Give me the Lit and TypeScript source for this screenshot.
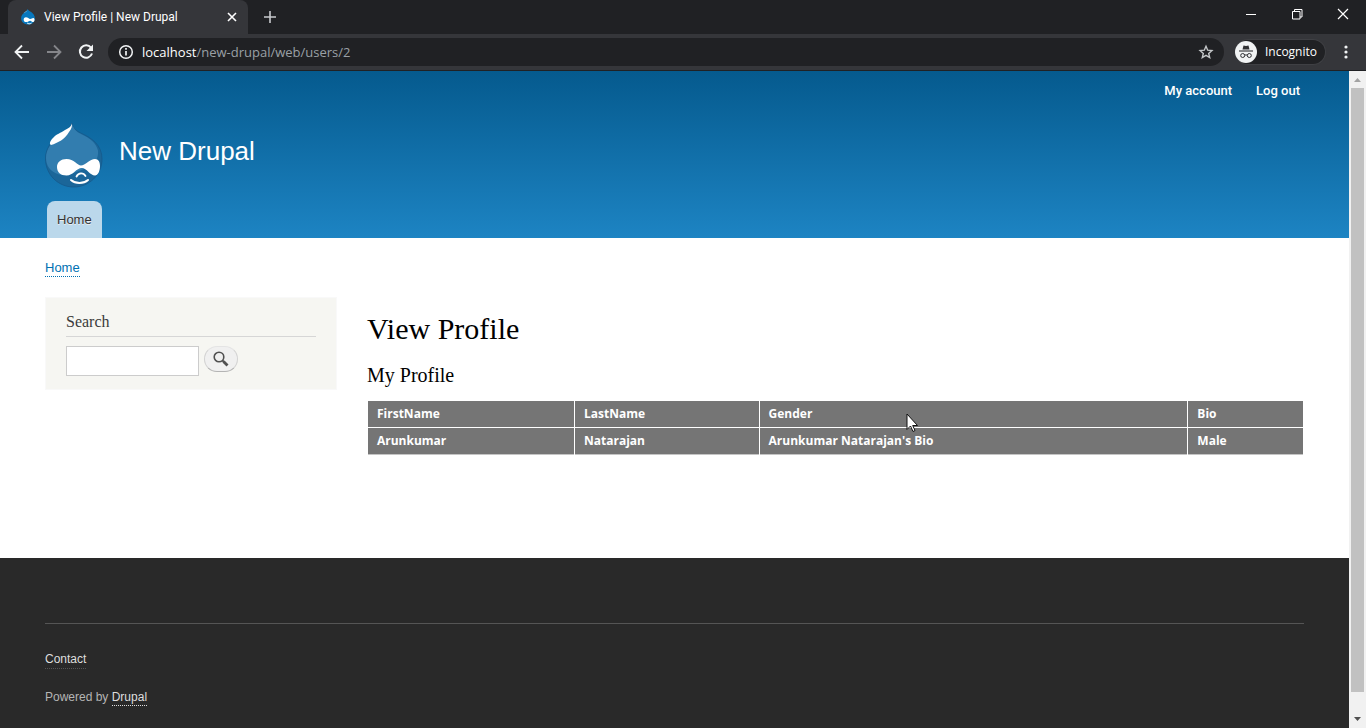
import { LitElement, html, css, svg } from "lit";
import { customElement } from "lit/decorators.js";

const druplicon = svg`
  <path d="M26.700 0c1.500 5 4 7.500 9 10C47 15 57 22 57 36 57 52 44 64 28.700 64S.5 52 .5 35.500C.5 26 6 18 14.500 12.500 20 9 27 7 26.700 0Z" fill="#1b6699" stroke="#15598b" stroke-width=".8"/>
  <path d="M27 1c2 6 5 8 10 10.500 8 4 14 8 16 16 1 9-5 16-12 18-8 2-16 8-27 6C5 49 1 42 1 35 1 26 7 18 15 13 21 9 26 7 27 1Z" fill="#327daf"/>
  <path d="M26.700 0c.8 3-.2 6-2.700 9-4 7-11 11-18 13-2-1-1-4 2-7 3-4 8-5 12-8 4-2 7-4 6.700-7Z" fill="#fff"/>
  <path d="M21.500 36c7.500 0 11 6.500 14.500 6.500 4 0 9-6.500 14-6.500 3.500 0 5 3 5 7 0 5-2 9.500-5 9.500-5 0-8.500-7.500-13-7.500-6 0-8.500 7.500-15.500 7.500-6 0-9.500-3.500-9.500-8.500s4-8 9.500-8Z" fill="#fff"/>
  <path d="M31.500 53.500c2-4 7-4 9-.5" fill="none" stroke="#fff" stroke-width="1.800" stroke-linecap="round"/>
  <path d="M26 57c4.500 4 12.500 4 17 0" fill="none" stroke="#fff" stroke-width="2" stroke-linecap="round"/>`;

@customElement("browser-bar")
class BrowserBar extends LitElement {
  static styles = css`
    :host { display: block; font: 12px/18px "Open Sans", "Noto Sans", sans-serif; color: #fff; background: #202124; }
    button { border: 0; padding: 0; background: none; color: inherit; font: inherit; display: grid; place-items: center; }
    svg { display: block; }
    .strip { display: flex; height: 34px; padding-left: 8px; }
    .tab { display: flex; align-items: center; width: 240px; box-sizing: border-box; padding: 0 9px 0 13px; gap: 9px; background: #35363a; border-radius: 8px 8px 0 0; }
    .title { flex: 1; white-space: nowrap; font-size: 12px; font-family: Roboto, sans-serif; }
    .add { width: 44px; }
    .windows { margin-left: auto; display: flex; height: 28px; }
    .windows button { width: 46px; }
    .toolbar { display: flex; align-items: center; height: 36px; background: #35363a; border-bottom: 1px solid #202124; padding: 0 12px 0 6px; }
    .nav { width: 32px; height: 32px; }
    .address { flex: 1; display: flex; align-items: center; height: 28px; margin: 0 11px 0 6px; padding: 0 10px; border-radius: 14px; background: #202124; gap: 8px; }
    .url { flex: 1; color: #9aa0a6; font: 13px/20px "Open Sans", sans-serif; }
    .host { color: #fff; }
    .mode { display: flex; align-items: center; gap: 8px; height: 24px; border: 1px solid #3f4044; border-left: 0; border-radius: 13px; background: #202124; padding-right: 8px; }
    .menu { width: 16px; height: 28px; margin-left: 12px; }
  `;
  render() {
    return html`
      <div class="strip">
        <div class="tab">
          <svg width="14" height="16" viewBox="0 0 57 66">
            <path d="M27 0c3 10 30 14 30 39 0 16-13 25-28 25S0 54 0 38C0 16 25 14 27 0Z" fill="#0878be"/>
            <path d="M27 0c0 9-8 14-17 18 4-7 16-8 17-18Z" fill="#7fc3ea"/>
            <path d="M20 34c8 0 12 7 18 7s8-5 13-4c7 1 5 18-1 17-5 0-8-6-13-6s-10 7-17 6c-13-1-12-20 0-20Z" fill="#fff"/>
            <path d="M25 58c6 4 12 4 18 0" fill="none" stroke="#fff" stroke-width="4"/>
          </svg>
          <span class="title">View Profile | New Drupal</span>
          <button aria-label="Close tab"><svg width="14" height="14"><path d="M3 3l8 8M11 3l-8 8" stroke="#fff" stroke-width="1.600"/></svg></button>
        </div>
        <button class="add" aria-label="New tab"><svg width="14" height="14"><path d="M7 1v12M1 7h12" stroke="#c8cacd" stroke-width="1.600"/></svg></button>
        <div class="windows">
          <button aria-label="Minimize"><svg width="11" height="11"><path d="M0 5.500h10" stroke="#fff"/></svg></button>
          <button aria-label="Restore"><svg width="11" height="11" fill="none" stroke="#fff"><path d="M.5 2.500h7.500v7.500h-7.500zM2.500 2.500v-2h7.500v7.500h-2"/></svg></button>
          <button aria-label="Close window"><svg width="12" height="12"><path d="M1 1l10 10M11 1l-10 10" stroke="#fff" stroke-width="1.200"/></svg></button>
        </div>
      </div>
      <div class="toolbar">
        <button class="nav" aria-label="Back"><svg width="16" height="16" fill="none" stroke="#f1f3f4" stroke-width="1.800"><path d="M15 8H2M8 1.500L1.500 8 8 14.500"/></svg></button>
        <button class="nav" aria-label="Forward"><svg width="16" height="16" fill="none" stroke="#85868a" stroke-width="1.800"><path d="M1 8h13M8 1.500L14.500 8 8 14.500"/></svg></button>
        <button class="nav" aria-label="Reload"><svg width="16" height="16" fill="none" stroke="#f1f3f4" stroke-width="2"><path d="M13 3.700A6.200 6.200 0 1 0 14 9.500"/><path d="M15 .5V7H8.500Z" fill="#f1f3f4" stroke="none"/></svg></button>
        <div class="address">
          <svg width="16" height="16"><circle cx="8" cy="8" r="6.300" fill="none" stroke="#f1f3f4" stroke-width="1.500"/><path d="M8 7v4.500M8 4v1.700" stroke="#f1f3f4" stroke-width="1.700"/></svg>
          <span class="url"><span class="host">localhost</span>/new-drupal/web/users/2</span>
          <button aria-label="Bookmark this page"><svg width="16" height="16"><path d="M8 2.200l1.700 4 4.200.4-3.200 2.800 1 4.200L8 11.400l-3.700 2.200 1-4.200L2.100 6.600 6.300 6.200Z" fill="none" stroke="#c4c7c9" stroke-width="1.400"/></svg></button>
        </div>
        <div class="mode">
          <svg width="22" height="22" viewBox="0 0 22 22"><circle cx="11" cy="11" r="11" fill="#f1f3f4"/><path d="M7.500 8.500L8.500 4.500l2.500.5 2.500-.5 1 4Z" fill="#303134"/><path d="M4 10h14" stroke="#303134" stroke-width="1.100"/><g fill="none" stroke="#303134"><circle cx="7.700" cy="14.500" r="2"/><circle cx="14.300" cy="14.500" r="2"/><path d="M9.700 14.200q1.300-.7 2.600 0"/></g></svg>
          <span>Incognito</span>
        </div>
        <button class="menu" aria-label="Browser menu"><svg width="4" height="16" fill="#f1f3f4"><circle cx="2" cy="3" r="1.600"/><circle cx="2" cy="8" r="1.600"/><circle cx="2" cy="13" r="1.600"/></svg></button>
      </div>`;
  }
}

@customElement("site-page")
class SitePage extends LitElement {
  static styles = css`
    :host { display: flex; flex-direction: column; min-height: 100%; background: #fff; font: 13px/20px "Liberation Sans", Arial, sans-serif; }
    a { color: inherit; text-decoration: none; }
    svg { display: block; }
    h1, h2, h3 { margin: 0; font-family: "Liberation Serif", Georgia, serif; font-weight: 400; }
    .header { background: linear-gradient(#055a8e, #1d84c3); padding: 0 45px; color: #fff; }
    .account { display: flex; justify-content: flex-end; gap: 24px; padding: 10px 4px 0 0; font: 500 13px/20px Roboto, sans-serif; }
    .brand { display: flex; gap: 16px; padding-top: 22px; height: 78px; }
    .name { font-size: 26px; line-height: 30px; padding-top: 13px; }
    .tabs { display: flex; padding-left: 2px; }
    .tabs a { height: 37px; line-height: 38px; padding: 0 10px; border-radius: 8px 8px 0 0; background: #bbd8eb; color: #333; text-shadow: 0 1px #eee; }
    .crumbs { padding: 21px 45px 0; line-height: 18px; }
    .crumbs a { display: inline-block; color: #0071b3; border-bottom: 1px dotted #0071b3; line-height: 16px; }
    .body { display: flex; align-items: flex-start; gap: 30px; padding: 20px 45px 0; flex: 1; }
    .search { flex: 0 0 23%; box-sizing: border-box; min-width: 292px; padding: 13px 20px; border: 1px solid #f9f9f9; background: #f6f6f2; }
    .search h3 { font-size: 16px; line-height: 21px; padding-bottom: 4px; border-bottom: 1px solid #d6d6d6; color: #3b3b3b; }
    .form { display: flex; align-items: flex-start; gap: 5px; padding-top: 9px; }
    .form input { width: 133px; height: 30px; box-sizing: border-box; border: 1px solid #ccc; padding: 4px; background: #fff; }
    .form button { width: 34px; height: 26px; display: grid; place-items: center; padding: 0; background: #f0f0f0; border: 1px solid #e4e4e4; border-color: #e4e4e4 #d2d2d2 #b4b4b4; border-radius: 13px; }
    .content { flex: 1; min-width: 0; padding-top: 14px; color: #000; }
    h1 { font-size: 30px; line-height: 36px; }
    h2 { font-size: 20px; line-height: 24px; padding: 16px 0 13px; }
    table { width: 100%; table-layout: fixed; border-collapse: separate; border-spacing: 1px; font: 700 12px/16px "Open Sans", "Noto Sans", sans-serif; color: #fff; }
    td, th { background: #757575; padding: 5px 9px; text-align: left; font-weight: 700; }
    .c1 { width: 22.1%; }
    .c2 { width: 19.7%; }
    .c3 { width: 45.9%; }
    tbody td { box-shadow: 0 1px #c4c4c4; }
    .footer { background: #292929; padding: 65px 45px 21px; font-size: 12px; color: #b5b5b5; }
    .foot { border-top: 1px solid #555; padding-top: 26px; display: grid; gap: 18px; justify-items: start; }
    .foot a { display: inline-block; line-height: 18px; color: #dedede; border-bottom: 1px dotted #dedede; }
    .foot .quiet { border-bottom-color: #555; }
    .foot .credit a { line-height: 16px; }
  `;
  render() {
    return html`
      <header class="header">
        <nav class="account"><a href="#account">My account</a><a href="#logout">Log out</a></nav>
        <div class="brand">
          <a href="#home" aria-label="Home"><svg width="58" height="66" viewBox="0 0 58 66">${druplicon}</svg></a>
          <a class="name" href="#home">New Drupal</a>
        </div>
        <nav class="tabs"><a href="#home">Home</a></nav>
      </header>
      <nav class="crumbs"><a href="#home">Home</a></nav>
      <main class="body">
        <aside class="search">
          <h3><label for="q">Search</label></h3>
          <form class="form" @submit=${(e: Event) => e.preventDefault()}>
            <input id="q" type="search" />
            <button aria-label="Search"><svg width="18" height="18" fill="none"><circle cx="7" cy="7" r="4.800" stroke="#505050" stroke-width="1.600"/><path d="M10.500 10.500l2 2" stroke="#505050" stroke-width="1.800"/><path d="M11.500 11.500l4 4" stroke="#505050" stroke-width="2.800"/></svg></button>
          </form>
        </aside>
        <section class="content">
          <h1>View Profile</h1>
          <h2>My Profile</h2>
          <table>
            <colgroup><col class="c1" /><col class="c2" /><col class="c3" /><col /></colgroup>
            <thead><tr><th>FirstName</th><th>LastName</th><th>Gender</th><th>Bio</th></tr></thead>
            <tbody><tr><td>Arunkumar</td><td>Natarajan</td><td>Arunkumar Natarajan's Bio</td><td>Male</td></tr></tbody>
          </table>
        </section>
      </main>
      <footer class="footer">
        <div class="foot">
          <a class="quiet" href="#contact">Contact</a>
          <span class="credit">Powered by <a href="#drupal">Drupal</a></span>
        </div>
      </footer>`;
  }
}

@customElement("app-root")
class AppRoot extends LitElement {
  static styles = css`
    :host { display: flex; flex-direction: column; height: 100vh; position: relative; overflow: hidden; }
    .view { flex: 1; display: flex; min-height: 0; }
    site-page { flex: 1; }
    .scroll { width: 17px; box-sizing: border-box; padding: 0 2px; background: #f1f1f1; display: flex; flex-direction: column; }
    .scroll svg { display: block; width: 13px; height: 17px; }
    .thumb { flex: 1; background: #c1c1c1; margin-bottom: 19px; }
    .pointer { position: absolute; left: 906px; top: 413px; }
  `;
  render() {
    return html`
      <browser-bar></browser-bar>
      <div class="view">
        <site-page></site-page>
        <div class="scroll">
          <svg><path d="M3 11h7L6.500 7Z" fill="#a3a3a3"/></svg>
          <div class="thumb"></div>
          <svg><path d="M3 6h7L6.500 10Z" fill="#505050"/></svg>
        </div>
      </div>
      <svg class="pointer" width="13" height="20"><path d="M1 1v15.500l3.500-3.500 2.500 5.500 2-1-2.300-5H11.500Z" fill="#fff" stroke="#111" stroke-width="1"/></svg>`;
  }
}
